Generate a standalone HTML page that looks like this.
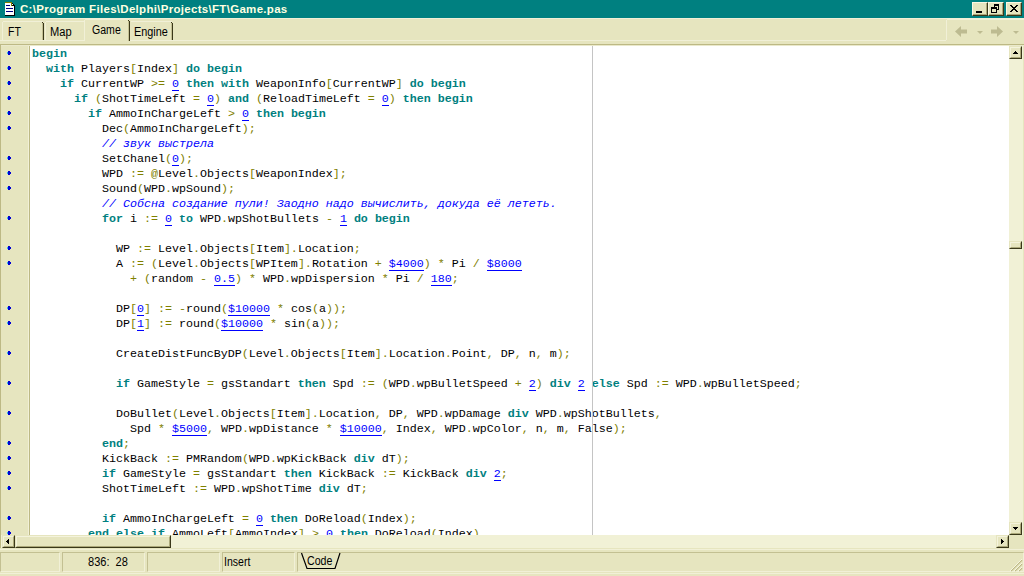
<!DOCTYPE html>
<html><head><meta charset="utf-8">
<style>
html,body{margin:0;padding:0;}
body{width:1024px;height:576px;overflow:hidden;background:#E6E5BF;font-family:"Liberation Sans",sans-serif;font-size:11px;color:#000;position:relative;}
.a{position:absolute;}
.tx{position:absolute;white-space:nowrap;font-size:12px;line-height:14px;transform-origin:0 0;transform:scaleX(0.89);}
#title{left:0;top:0;width:1024px;height:18px;background:#008080;}
#title .t{position:absolute;left:20px;top:2px;font-weight:bold;font-size:11.5px;line-height:14px;color:#FFFFE1;white-space:nowrap;letter-spacing:0.3px;}
.cb{position:absolute;top:2px;width:16px;height:14px;background:#E6E5BF;box-sizing:border-box;border-top:1px solid #FAF9E4;border-left:1px solid #FAF9E4;border-right:1px solid #3A381A;border-bottom:1px solid #3A381A;}
.cb:before{content:"";position:absolute;left:0;top:0;right:0;bottom:0;border-right:1px solid #ABA87A;border-bottom:1px solid #ABA87A;}
.L{background:#F1F0D7;}
.D{background:#C3C093;}
.K{background:#3A381A;}
#ed{left:30px;top:46px;width:979px;height:489px;background:#fff;overflow:hidden;}
#gut{left:1px;top:46px;width:28px;height:489px;background:#E6E5BF;}
#code{position:absolute;left:2px;top:1px;font-family:"Liberation Mono",monospace;font-size:11.667px;color:#000;}
.l{height:15px;line-height:15px;white-space:pre;}
.l b{color:#008080;font-weight:bold;}
.l i{color:#0000FF;font-style:italic;}
.l u{color:#0000FF;text-decoration:none;display:inline-block;height:14px;vertical-align:top;box-shadow:inset 0 -1px 0 #0000FF;}
.l s{color:#808000;text-decoration:none;}
.d{position:absolute;left:7px;width:4px;height:4px;}
.d:before{content:"";position:absolute;left:1px;top:0;width:2px;height:4px;background:#0000D0;}
.d:after{content:"";position:absolute;left:0;top:1px;width:4px;height:2px;background:#0000D0;border-left:1px solid #30B0F0;box-sizing:border-box;}
.sb{position:absolute;width:13px;height:13px;background:#E6E5BF;box-sizing:border-box;border-top:1px solid #E6E5BF;border-left:1px solid #E6E5BF;border-right:1px solid #3A381A;border-bottom:1px solid #3A381A;}
.sb:before{content:"";position:absolute;left:0;top:0;right:0;bottom:0;border-right:1px solid #ABA87A;border-bottom:1px solid #ABA87A;border-top:1px solid #F4F3DC;border-left:1px solid #F4F3DC;}
.pn{position:absolute;top:552px;height:20px;box-sizing:border-box;border-top:1px solid #C3C092;border-left:1px solid #C3C092;border-right:1px solid #F1F0D7;border-bottom:1px solid #F1F0D7;}
</style></head><body>
<!-- title bar -->
<div id="title" class="a"><div class="t">C:\Program Files\Delphi\Projects\FT\Game.pas</div>
<svg class="a" style="left:4px;top:1px" width="12" height="16" viewBox="4 1 12 16" shape-rendering="crispEdges">
<rect x="5" y="2" width="9" height="13" fill="#fff"/>
<rect x="5" y="2" width="7" height="1" fill="#808000"/>
<rect x="11" y="2" width="3" height="4" fill="#008080"/>
<rect x="11" y="2" width="1" height="4" fill="#808000"/>
<rect x="12" y="5" width="2" height="1" fill="#000"/>
<rect x="12" y="4" width="1" height="1" fill="#fff"/>
<rect x="12" y="3" width="1" height="1" fill="#000"/><rect x="13" y="4" width="1" height="1" fill="#000"/>
<rect x="14" y="5" width="1" height="11" fill="#000"/>
<rect x="5" y="15" width="10" height="1" fill="#000"/>
<rect x="6" y="5" width="4" height="1" fill="#000080"/>
<rect x="6" y="8" width="7" height="1" fill="#000080"/>
<rect x="6" y="11" width="7" height="1" fill="#000080"/>
</svg>
<div class="cb" style="left:972px"><div class="a" style="left:3px;top:8px;width:6px;height:2px;background:#000"></div></div>
<div class="cb" style="left:988px">
 <div class="a" style="left:5px;top:1px;width:5px;height:6px;box-sizing:border-box;border:1px solid #000;border-top-width:2px"></div>
 <div class="a" style="left:2px;top:4px;width:6px;height:6px;box-sizing:border-box;border:1px solid #000;border-top-width:2px;background:#E6E5BF"></div>
</div>
<div class="cb" style="left:1006px"><svg class="a" style="left:3px;top:2px" width="8" height="7" viewBox="0 0 8 7" shape-rendering="crispEdges"><path d="M0 0h2v1h-2zM6 0h2v1h-2zM1 1h2v1h-2zM5 1h2v1h-2zM2 2h4v1h-4zM3 3h2v1h-2zM2 4h4v1h-4zM1 5h2v1h-2zM5 5h2v1h-2zM0 6h2v1h-2zM6 6h2v1h-2z" fill="#000"/></svg></div>
</div>
<!-- tab bar -->
<div class="a L" style="left:0;top:40px;width:946px;height:1px"></div>
<div class="a L" style="left:946px;top:20px;width:1px;height:20px"></div>
<div class="a L" style="left:0px;top:18px;width:1024px;height:1px"></div>
<div class="a L" style="left:947px;top:19px;width:77px;height:1px"></div>
<!-- tabs -->
<div class="a L" style="left:2px;top:22px;width:1px;height:18px"></div>
<div class="a L" style="left:3px;top:21px;width:40px;height:1px"></div>
<div class="a K" style="left:43px;top:23px;width:1px;height:17px"></div><div class="a K" style="left:42px;top:22px;width:1px;height:1px"></div>
<div class="a D" style="left:42px;top:23px;width:1px;height:17px"></div>
<div class="tx" style="left:8px;top:25px;transform:scaleX(0.87)">FT</div>
<div class="a L" style="left:45px;top:22px;width:1px;height:18px"></div>
<div class="a L" style="left:46px;top:21px;width:39px;height:1px"></div>
<div class="tx" style="left:50px;top:25px;transform:scaleX(0.925)">Map</div>
<!-- selected Game tab -->
<div class="a" style="left:84px;top:19px;width:46px;height:23px;background:#E6E5BF"></div>
<div class="a L" style="left:84px;top:20px;width:1px;height:21px"></div>
<div class="a L" style="left:85px;top:19px;width:44px;height:1px"></div>
<div class="a K" style="left:129px;top:21px;width:1px;height:20px"></div><div class="a K" style="left:128px;top:20px;width:1px;height:1px"></div>
<div class="a D" style="left:128px;top:21px;width:1px;height:20px"></div>
<div class="tx" style="left:92px;top:23px;transform:scaleX(0.88)">Game</div>
<div class="a L" style="left:131px;top:21px;width:41px;height:1px"></div>
<div class="a K" style="left:172px;top:23px;width:1px;height:17px"></div><div class="a K" style="left:171px;top:22px;width:1px;height:1px"></div>
<div class="a D" style="left:171px;top:23px;width:1px;height:17px"></div>
<div class="tx" style="left:134px;top:25px;transform:scaleX(0.905)">Engine</div>
<!-- nav arrows -->
<svg class="a" style="left:950px;top:22px" width="74" height="18" viewBox="950 22 74 18">
<path d="M955 31.5l6-5.5v3.5h6v4h-6v3.5z" fill="#BDBB91"/>
<path d="M977 31h6l-3 3z" fill="#BDBB91"/>
<path d="M1003 31.5l-6-5.5v3.5h-6v4h6v3.5z" fill="#BDBB91"/>
<path d="M1013 31h6l-3 3z" fill="#BDBB91"/>
</svg>
<!-- editor frame -->
<div class="a" style="left:0;top:44px;width:1024px;height:1px;background:#BDB985"></div>
<div class="a" style="left:0;top:45px;width:1024px;height:1px;background:#EAE9CB"></div>
<div class="a" style="left:0;top:44px;width:1px;height:504px;background:#BDB985"></div>
<div id="gut" class="a"></div>
<div class="a L" style="left:28px;top:46px;width:1px;height:489px"></div>
<div class="a" style="left:29px;top:46px;width:1px;height:489px;background:#BDB985"></div>
<div id="ed" class="a"><div id="code"><div class="l"><b>begin</b></div><div class="l">  <b>with</b> Players<s>[</s>Index<s>]</s> <b>do</b> <b>begin</b></div><div class="l">    <b>if</b> CurrentWP <s>&gt;=</s> <u>0</u> <b>then</b> <b>with</b> WeaponInfo<s>[</s>CurrentWP<s>]</s> <b>do</b> <b>begin</b></div><div class="l">      <b>if</b> <s>(</s>ShotTimeLeft <s>=</s> <u>0</u><s>)</s> <b>and</b> <s>(</s>ReloadTimeLeft <s>=</s> <u>0</u><s>)</s> <b>then</b> <b>begin</b></div><div class="l">        <b>if</b> AmmoInChargeLeft <s>&gt;</s> <u>0</u> <b>then</b> <b>begin</b></div><div class="l">          Dec<s>(</s>AmmoInChargeLeft<s>);</s></div><div class="l">          <i>// звук выстрела</i></div><div class="l">          SetChanel<s>(</s><u>0</u><s>);</s></div><div class="l">          WPD <s>:=</s> <s>@</s>Level<s>.</s>Objects<s>[</s>WeaponIndex<s>];</s></div><div class="l">          Sound<s>(</s>WPD<s>.</s>wpSound<s>);</s></div><div class="l">          <i>// Собсна создание пули! Заодно надо вычислить, докуда её лететь.</i></div><div class="l">          <b>for</b> i <s>:=</s> <u>0</u> <b>to</b> WPD<s>.</s>wpShotBullets <s>-</s> <u>1</u> <b>do</b> <b>begin</b></div><div class="l"></div><div class="l">            WP <s>:=</s> Level<s>.</s>Objects<s>[</s>Item<s>].</s>Location<s>;</s></div><div class="l">            A <s>:=</s> <s>(</s>Level<s>.</s>Objects<s>[</s>WPItem<s>].</s>Rotation <s>+</s> <u>$4000</u><s>)</s> <s>*</s> Pi <s>/</s> <u>$8000</u></div><div class="l">              <s>+</s> <s>(</s>random <s>-</s> <u>0.5</u><s>)</s> <s>*</s> WPD<s>.</s>wpDispersion <s>*</s> Pi <s>/</s> <u>180</u><s>;</s></div><div class="l"></div><div class="l">            DP<s>[</s><u>0</u><s>]</s> <s>:=</s> <s>-</s>round<s>(</s><u>$10000</u> <s>*</s> cos<s>(</s>a<s>));</s></div><div class="l">            DP<s>[</s><u>1</u><s>]</s> <s>:=</s> round<s>(</s><u>$10000</u> <s>*</s> sin<s>(</s>a<s>));</s></div><div class="l"></div><div class="l">            CreateDistFuncByDP<s>(</s>Level<s>.</s>Objects<s>[</s>Item<s>].</s>Location<s>.</s>Point<s>,</s> DP<s>,</s> n<s>,</s> m<s>);</s></div><div class="l"></div><div class="l">            <b>if</b> GameStyle <s>=</s> gsStandart <b>then</b> Spd <s>:=</s> <s>(</s>WPD<s>.</s>wpBulletSpeed <s>+</s> <u>2</u><s>)</s> <b>div</b> <u>2</u> <b>else</b> Spd <s>:=</s> WPD<s>.</s>wpBulletSpeed<s>;</s></div><div class="l"></div><div class="l">            DoBullet<s>(</s>Level<s>.</s>Objects<s>[</s>Item<s>].</s>Location<s>,</s> DP<s>,</s> WPD<s>.</s>wpDamage <b>div</b> WPD<s>.</s>wpShotBullets<s>,</s></div><div class="l">              Spd <s>*</s> <u>$5000</u><s>,</s> WPD<s>.</s>wpDistance <s>*</s> <u>$10000</u><s>,</s> Index<s>,</s> WPD<s>.</s>wpColor<s>,</s> n<s>,</s> m<s>,</s> False<s>);</s></div><div class="l">          <b>end</b><s>;</s></div><div class="l">          KickBack <s>:=</s> PMRandom<s>(</s>WPD<s>.</s>wpKickBack <b>div</b> dT<s>);</s></div><div class="l">          <b>if</b> GameStyle <s>=</s> gsStandart <b>then</b> KickBack <s>:=</s> KickBack <b>div</b> <u>2</u><s>;</s></div><div class="l">          ShotTimeLeft <s>:=</s> WPD<s>.</s>wpShotTime <b>div</b> dT<s>;</s></div><div class="l"></div><div class="l">          <b>if</b> AmmoInChargeLeft <s>=</s> <u>0</u> <b>then</b> DoReload<s>(</s>Index<s>);</s></div><div class="l">        <b>end</b> <b>else</b> <b>if</b> AmmoLeft<s>[</s>AmmoIndex<s>]</s> <s>&gt;</s> <u>0</u> <b>then</b> DoReload<s>(</s>Index<s>)</s></div></div></div>
<div class="a" style="left:592px;top:46px;width:1px;height:489px;background:#C4C4C4"></div>
<div class="d" style="top:51px"></div>
<div class="d" style="top:66px"></div>
<div class="d" style="top:81px"></div>
<div class="d" style="top:96px"></div>
<div class="d" style="top:111px"></div>
<div class="d" style="top:126px"></div>
<div class="d" style="top:156px"></div>
<div class="d" style="top:171px"></div>
<div class="d" style="top:186px"></div>
<div class="d" style="top:216px"></div>
<div class="d" style="top:246px"></div>
<div class="d" style="top:261px"></div>
<div class="d" style="top:306px"></div>
<div class="d" style="top:321px"></div>
<div class="d" style="top:351px"></div>
<div class="d" style="top:381px"></div>
<div class="d" style="top:411px"></div>
<div class="d" style="top:441px"></div>
<div class="d" style="top:456px"></div>
<div class="d" style="top:471px"></div>
<div class="d" style="top:486px"></div>
<div class="d" style="top:516px"></div>
<div class="d" style="top:531px"></div>
<!-- vscroll -->
<div class="a" style="left:1009px;top:46px;width:14px;height:489px;background:#F1F1D6"></div>
<div class="sb" style="left:1009px;top:46px"><svg class="a" style="left:3px;top:4px" width="5" height="3" shape-rendering="crispEdges"><path d="M2 0h1v1h-1zM1 1h3v1h-3zM0 2h5v1h-5z"/></svg></div>
<div class="sb" style="left:1009px;top:241px;height:8px"></div>
<div class="sb" style="left:1009px;top:522px"><svg class="a" style="left:3px;top:4px" width="5" height="3" shape-rendering="crispEdges"><path d="M0 0h5v1h-5zM1 1h3v1h-3zM2 2h1v1h-1z"/></svg></div>
<!-- hscroll -->
<div class="a" style="left:1px;top:535px;width:1008px;height:13px;background:#F1F1D6"></div>
<div class="sb" style="left:2px;top:535px"><svg class="a" style="left:3px;top:3px" width="3" height="5" shape-rendering="crispEdges"><path d="M2 0h1v5h-1zM1 1h1v3h-1zM0 2h1v1h-1z"/></svg></div>
<div class="sb" style="left:15px;top:535px;width:156px"></div>
<div class="sb" style="left:996px;top:535px"><svg class="a" style="left:4px;top:3px" width="3" height="5" shape-rendering="crispEdges"><path d="M0 0h1v5h-1zM1 1h1v3h-1zM2 2h1v1h-1z"/></svg></div>
<div class="a" style="left:1009px;top:535px;width:13px;height:13px;background:#E6E5BF"></div>
<!-- status bar -->
<div class="a L" style="left:0;top:549px;width:1024px;height:1px"></div>
<div class="pn" style="left:0px;width:60px"></div>
<div class="pn" style="left:62px;width:83px"></div>
<div class="pn" style="left:147px;width:73px"></div>
<div class="pn" style="left:222px;width:73px"></div>
<div class="pn" style="left:297px;width:727px"></div>
<div class="a L" style="left:0;top:573px;width:1024px;height:1px"></div>
<div class="tx" style="left:88px;top:555px;transform:scaleX(0.92)">836:&nbsp; 28</div>
<div class="tx" style="left:224px;top:555px;transform:scaleX(0.877)">Insert</div>
<div class="tx" style="left:307px;top:554px;transform:scaleX(0.885)">Code</div>
<svg class="a" style="left:298px;top:552px" width="46" height="18" viewBox="298 552 46 18"><path d="M301.5 553l5.5 15.5h28l5-15.5" fill="none" stroke="#000" stroke-width="1.2"/></svg>
<svg class="a" style="left:1010px;top:559px" width="13" height="13" viewBox="0 0 13 13"><path d="M12 1L1 12M12 5L5 12M12 9L9 12" stroke="#BDB987" stroke-width="1.2" fill="none"/><path d="M12 0L0 12M12 4L4 12M12 8L8 12" stroke="#F6F5DF" stroke-width="1" fill="none"/></svg>
</body></html>
